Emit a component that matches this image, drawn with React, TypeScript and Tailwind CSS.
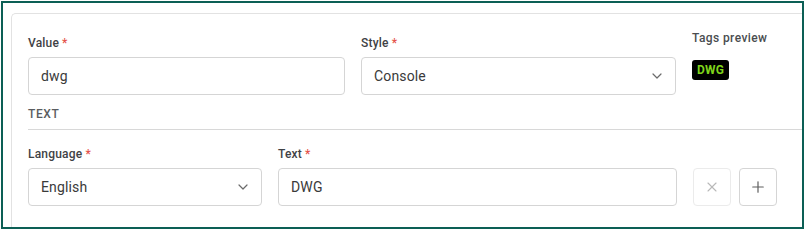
import { ChevronDown, X, Plus } from "lucide-react";

function Label({ text, required = true }: { text: string; required?: boolean }) {
    return (
        <div className="text-[12px] leading-4 font-medium text-[#3f4245] mb-[6px] tracking-[0.2px]">
            {text}
            {required && <span className="text-[#e5534b] ml-[3px]">*</span>}
        </div>
    );
}

function Field({ value, width, select = false }: { value: string; width: string; select?: boolean }) {
    return (
        <div className={`${width} h-[38px] border border-[#d5d5d5] rounded-[4px] flex items-center justify-between pl-3 pr-[10px] text-[14px] tracking-[0.15px] text-[#3a3a3a]`}>
            <span>{value}</span>
            {select && <ChevronDown size={16} strokeWidth={1.8} className="text-[#6b6b6b]" />}
        </div>
    );
}

export default function App() {
    return (
        <div className="w-[805px] h-[231px] bg-white pt-px pl-px" style={{ fontFamily: "Roboto, 'Liberation Sans', sans-serif" }}>
            <div className="w-[803px] h-[228px] border-2 border-[#0c5f55] overflow-hidden pl-2 pt-[10px]">
                <div className="w-[820px] h-[260px] border-l border-t border-[#e2e2e2] rounded-tl-[5px] pl-4 pt-[21px]">
                    <div className="flex gap-4">
                        <div>
                            <Label text="Value" />
                            <Field value="dwg" width="w-[317px]" />
                        </div>
                        <div>
                            <Label text="Style" />
                            <Field value="Console" width="w-[315px]" select />
                        </div>
                        <div className="-mt-[5px]">
                            <div className="text-[12px] leading-4 font-medium text-[#4a4d50] tracking-[0.4px]">Tags preview</div>
                            <span className="inline-block mt-[14px] bg-black text-[#7fd41b] text-[12px] leading-5 font-bold px-[5px] tracking-[0.2px] rounded-[3px]">DWG</span>
                        </div>
                    </div>
                    <div className="mt-[11px] text-[12px] leading-4 font-medium text-[#5a5d60] tracking-[0.6px] pb-[7px] border-b border-[#d8d8d8]">TEXT</div>
                    <div className="flex gap-4 mt-4">
                        <div>
                            <Label text="Language" />
                            <Field value="English" width="w-[234px]" select />
                        </div>
                        <div>
                            <Label text="Text" />
                            <Field value="DWG" width="w-[399px]" />
                        </div>
                        <div className="flex gap-2 items-end">
                            <button className="w-[38px] h-[38px] border border-[#ebebeb] rounded-[4px] flex items-center justify-center text-[#b8b8b8]">
                                <X size={16} strokeWidth={1.6} />
                            </button>
                            <button className="w-[38px] h-[38px] border border-[#d5d5d5] rounded-[4px] flex items-center justify-center text-[#5e5e5e]">
                                <Plus size={18} strokeWidth={1.6} />
                            </button>
                        </div>
                    </div>
                </div>
            </div>
        </div>
    );
}
